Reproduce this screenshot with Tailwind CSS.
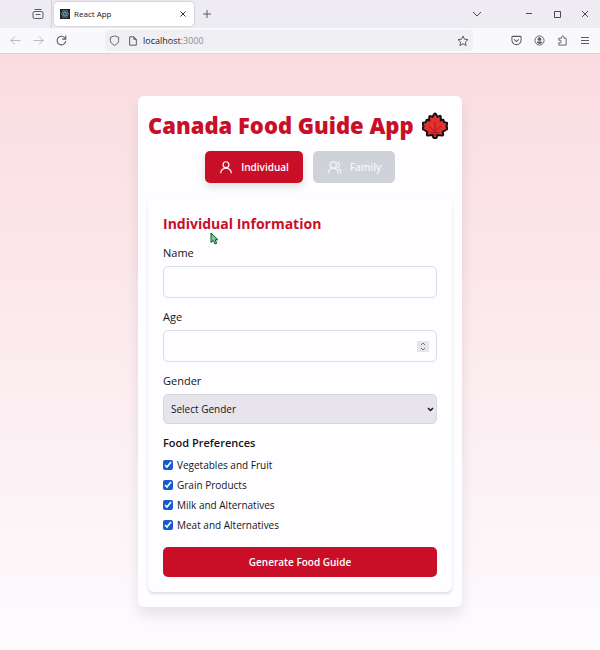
<!DOCTYPE html>
<html lang="en">
<head>
<meta charset="utf-8">
<meta name="viewport" content="width=device-width, initial-scale=1">
<title>React App</title>
<script src="https://cdn.jsdelivr.net/npm/@tailwindcss/browser@4"></script>
</head>
<body class="min-h-screen flex flex-col bg-[#fdfbfe] font-['Open_Sans','Noto_Sans',sans-serif] text-[#15141a]">

<header class="text-[#5b5b66]">
  <!-- Tab strip -->
  <div class="flex items-center h-7 bg-[#eeecf2]">
    <button aria-label="Recent browsing" class="w-[52px] h-7 pl-8 border-r border-[#d2d0d8]">
      <svg class="size-3" viewBox="0 0 12 12" fill="none" stroke="currentColor" stroke-linecap="round" stroke-linejoin="round"><path d="M3 1.500h6"/><rect x="1" y="3.500" width="10" height="7" rx="1.500"/><path d="M4 6.500h4"/></svg>
    </button>
    <div class="ml-0.5 flex items-center w-[140px] h-6 pl-1.5 pr-1.5 rounded-sm bg-white shadow-[0_0_2px_#00000055]">
      <svg class="size-2.5 bg-[#20232a]" viewBox="0 0 20 20" fill="none" stroke="#6fa9bf" stroke-width="1.2"><ellipse cx="10" cy="10" rx="8" ry="3"/><ellipse cx="10" cy="10" rx="8" ry="3" transform="rotate(60 10 10)"/><ellipse cx="10" cy="10" rx="8" ry="3" transform="rotate(120 10 10)"/><circle cx="10" cy="10" r="1"/></svg>
      <span class="ml-1 flex-1 text-[8px] leading-3 text-[#15141a]">React App</span>
      <button aria-label="Close tab"><svg class="size-2.5" viewBox="0 0 10 10" stroke="#333" stroke-width="1"><path d="m2.5 2.5 5 5m0-5-5 5"/></svg></button>
    </div>
    <button aria-label="New tab" class="ml-2"><svg class="size-2.5" viewBox="0 0 10 10" stroke="currentColor"><path d="M5 1v8M1 5h8"/></svg></button>
    <div class="ml-auto flex items-center gap-[18px] pr-2.5 text-[#4a4a52]">
      <button aria-label="List tabs" class="mr-6"><svg class="size-2.5" viewBox="0 0 10 10" fill="none" stroke="currentColor"><path d="m1 3 4 4 4-4"/></svg></button>
      <button aria-label="Minimize"><svg class="size-2.5" viewBox="0 0 10 10" stroke="currentColor"><path d="M2 4.500h6"/></svg></button>
      <button aria-label="Maximize"><svg class="size-2.5" viewBox="0 0 10 10" fill="none" stroke="currentColor"><path d="M2.500 2.500h6v6h-6z"/></svg></button>
      <button aria-label="Close window"><svg class="size-2.5" viewBox="0 0 10 10" stroke="currentColor"><path d="m2 2 6 6m0-6-6 6"/></svg></button>
    </div>
  </div>
  <!-- Navigation bar -->
  <div class="flex items-center h-[26px] px-2.5 bg-[#f9f9fb] border-b border-[#d9d3da]">
    <div class="flex gap-3">
      <button aria-label="Back" class="text-[#b5b5bc]"><svg class="size-[11px]" viewBox="0 0 12 12" fill="none" stroke="currentColor" stroke-linecap="round"><path d="M11 6H1m4-4L1 6l4 4"/></svg></button>
      <button aria-label="Forward" class="text-[#b5b5bc]"><svg class="size-[11px]" viewBox="0 0 12 12" fill="none" stroke="currentColor" stroke-linecap="round"><path d="M1 6h10M7 2l4 4-4 4"/></svg></button>
      <button aria-label="Reload"><svg class="size-[11px]" viewBox="0 0 12 12" fill="none" stroke="currentColor" stroke-width="1.200" stroke-linecap="round"><path d="M10.500 7A4.700 4.700 0 1 1 9.500 3M10.700 1v3.500H7.200"/></svg></button>
    </div>
    <div class="ml-[38px] flex flex-1 items-center h-[21px] px-1 rounded-sm bg-[#f0eff4]">
      <svg class="size-[11px]" viewBox="0 0 12 12" fill="none" stroke="currentColor" stroke-linejoin="round"><path d="M6 1 10.500 2.500V6c0 2.500-2 4.200-4.500 5.200C3.500 10.200 1.500 8.500 1.500 6V2.500z"/></svg>
      <svg class="ml-2 size-[10px]" viewBox="0 0 12 12" fill="none" stroke="currentColor" stroke-width="1.200" stroke-linejoin="round"><path d="M2 1h5l3 3v7H2zM7 1v3h3"/></svg>
      <span class="ml-[5px] text-[9px] leading-3 text-[#8d8b95]"><span class="text-[#26252c]">localhost</span>:3000</span>
      <button aria-label="Bookmark" class="ml-auto"><svg class="size-3" viewBox="0 0 24 24" fill="none" stroke="currentColor" stroke-width="2" stroke-linejoin="round"><path d="m12 2 3 6.500 7 .8-5.200 4.800 1.400 7L12 17.600l-6.200 3.500 1.400-7L2 9.300l7-.8z"/></svg></button>
    </div>
    <div class="ml-[38px] flex items-center gap-3">
      <button aria-label="Save to Pocket"><svg class="size-[11px]" viewBox="0 0 12 12" fill="none" stroke="currentColor" stroke-width="1.100" stroke-linecap="round" stroke-linejoin="round"><path d="M2 1.500h8q1 0 1 1V5.500a5 5 0 0 1-10 0V2.500q0-1 1-1zM3.700 5 6 7.200 8.300 5"/></svg></button>
      <button aria-label="Account"><svg class="size-[11px]" viewBox="0 0 12 12" fill="none" stroke="currentColor"><circle cx="6" cy="6" r="5"/><circle cx="6" cy="4.500" r="1.600" fill="currentColor"/><path d="M3 8.500q0-1.500 1.500-1.500h3Q9 7 9 8.500 6 11 3 8.500z" fill="currentColor" stroke="none"/></svg></button>
      <button aria-label="Extensions"><svg class="size-[11px]" viewBox="0 0 12 12" fill="none" stroke="currentColor" stroke-linejoin="round"><path d="M2 11V8.500h1.200a1.400 1.400 0 0 0 0-2.800H2V3.500h3V2.400a1.300 1.300 0 0 1 2.600 0v1.100H10V11z"/></svg></button>
      <button aria-label="Menu"><svg class="size-[10px]" viewBox="0 0 10 10" stroke="currentColor"><path d="M1 1.500h8M1 4.500h8M1 7.500h8"/></svg></button>
    </div>
  </div>
</header>

<main class="relative flex-1 flex flex-col items-center px-4 pt-[42px] pb-10 bg-linear-to-b from-[#fadce0] to-[#fdfbfe]">
  <section class="w-full max-w-[324px] px-2.5 pt-2 pb-[15px] rounded-md bg-[#fefdff] shadow-[0_8px_14px_#00000018]">
    <h1 class="flex items-center gap-2 h-[42px] text-[22px] font-extrabold text-[#c90f27] whitespace-nowrap">
      Canada Food Guide App
      <svg class="w-[26px] h-[27px] shrink-0" viewBox="0 0 27 28" role="img" aria-label="Maple leaf" stroke-linejoin="round">
        <path d="M13.500 2.500 16 6.500l2.500-1.500V10l3-1 .7 2.500 3.300.5-1.300 3 1.300 2-5 3 .5 3.500-4.500-.7-1.500.2-.5 3h-2l-.5-3-1.500-.2L6 23.500l.5-3.500-5-3 1.300-2-1.300-3 3.300-.5L5.500 9l3 1V5L11 6.500z" fill="#e02c2c" stroke="#161010" stroke-width="4"/>
        <path d="M13.500 2.500 16 6.500l2.500-1.500V10l3-1 .7 2.500 3.300.5-1.300 3 1.300 2-5 3 .5 3.500-4.500-.7-1.500.2-.5 3h-2l-.5-3-1.500-.2L6 23.500l.5-3.500-5-3 1.300-2-1.300-3 3.300-.5L5.500 9l3 1V5L11 6.500z" fill="#e5302f"/>
        <path d="M13.500 10v15M13.500 20 7 14.500M13.500 20l6.500-5.500M13.500 21.500l-5-.5M13.500 21.500l5-.5" fill="none" stroke="#a8181f" stroke-width="1"/>
      </svg>
    </h1>
    <div class="mt-[5px] flex justify-center gap-2.5 text-[10px] font-semibold text-white">
      <button class="flex items-center justify-center gap-2 w-[98px] h-8 rounded-[5px] bg-[#c90f27] shadow-[0_4px_8px_#00000020]">
        <svg class="size-3.5" viewBox="0 0 24 24" fill="none" stroke="currentColor" stroke-width="2" stroke-linecap="round" stroke-linejoin="round"><circle cx="12" cy="8" r="5"/><path d="M3 22a9 8 0 0 1 18 0"/></svg>
        Individual
      </button>
      <button class="flex items-center justify-center gap-2 w-[82px] h-8 rounded-[5px] bg-[#cfd3d9] text-[#f4f4f7]">
        <svg class="size-[15px]" viewBox="0 0 24 24" fill="none" stroke="currentColor" stroke-width="2" stroke-linecap="round" stroke-linejoin="round"><circle cx="10" cy="8" r="5"/><path d="M2 21a8 8 0 0 1 16 0M16.500 3.500a5 5 0 0 1 .5 9M19 14.500q3.500 2 3.500 6.500"/></svg>
        Family
      </button>
    </div>

    <form class="mt-[15px] p-[15px] rounded-md bg-[#fefdff] shadow-[0_2px_3px_#00000020] text-[11px]">
      <h2 class="mb-[9px] text-[14px] leading-[22px] font-bold text-[#c90f27]">Individual Information</h2>
      <div class="mb-[9px]">
        <label for="name" class="block mb-1 leading-[18px]">Name</label>
        <input id="name" type="text" class="block w-full h-8 px-2 rounded-[5px] border border-[#dcdae2] bg-[#fefdff]">
      </div>
      <div class="mb-[9px] pt-px">
        <label for="age" class="block mb-1 leading-[18px]">Age</label>
        <div class="flex items-center w-full h-8 pl-2 pr-[7px] rounded-[5px] border border-[#dcdae2]">
          <input id="age" type="number" class="flex-1 min-w-0 outline-none [appearance:textfield]">
          <svg class="w-3 h-[11px] bg-[#e6e5ea]" viewBox="0 0 12 11" fill="none" stroke="#77767f" aria-hidden="true"><path d="m4 4 2-2 2 2M4 7l2 2 2-2"/></svg>
        </div>
      </div>
      <div class="mb-2.5 pt-px">
        <label for="gender" class="block mb-1 leading-[18px]">Gender</label>
        <div class="relative">
          <select id="gender" class="block w-full h-[30px] pl-[7px] appearance-none rounded-[5px] border border-[#d8d6de] bg-[#e7e5eb] text-[10px]">
            <option>Select Gender</option><option>Female</option><option>Male</option>
          </select>
          <svg class="absolute right-[3px] top-3 size-[7px] pointer-events-none" viewBox="0 0 7 7" fill="none" stroke="#15141a" stroke-width="1.500"><path d="m1 2 2.500 2.500L6 2"/></svg>
        </div>
      </div>
      <fieldset class="text-[10px]">
        <legend class="text-[11px] leading-[18px] font-semibold mb-[3px]">Food Preferences</legend>
        <label class="flex items-center gap-1 h-5"><input type="checkbox" checked class="size-[10px] accent-[#185bd0]">Vegetables and Fruit</label>
        <label class="flex items-center gap-1 h-5"><input type="checkbox" checked class="size-[10px] accent-[#185bd0]">Grain Products</label>
        <label class="flex items-center gap-1 h-5"><input type="checkbox" checked class="size-[10px] accent-[#185bd0]">Milk and Alternatives</label>
        <label class="flex items-center gap-1 h-5"><input type="checkbox" checked class="size-[10px] accent-[#185bd0]">Meat and Alternatives</label>
      </fieldset>
      <button type="button" class="mt-3 block w-full h-[30px] rounded-[5px] bg-[#c90f27] text-[10px] font-semibold text-white">Generate Food Guide</button>
    </form>
  </section>
  <!-- Mouse pointer -->
  <svg class="absolute left-[210px] top-[178px] w-[9px] h-[13px]" viewBox="0 0 9 13" aria-hidden="true"><path d="M1 1v9.500l2.300-2 1.700 3.500 1.700-.8L5.200 7.800H8z" fill="#5fdc87" stroke="#1d4a31"/></svg>
</main>
</body>
</html>
